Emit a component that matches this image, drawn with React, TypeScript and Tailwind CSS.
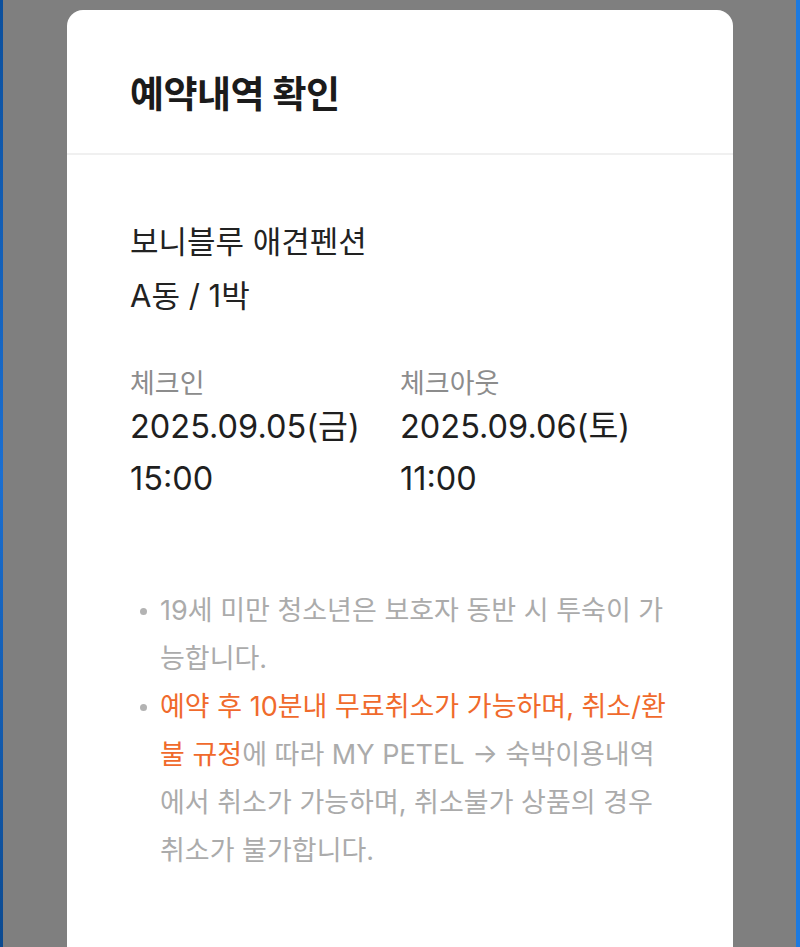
import React from 'react';

const FONT = { fontFamily: '"Inter", "Noto Sans CJK KR", "Noto Sans", sans-serif' };

const ReservationSheet: React.FC = () => {
  return (
    <div className="flex h-[947px] w-[800px] overflow-hidden bg-[#7f7f7f]" style={FONT}>
      {/* window edge */}
      <div className="w-[3px] shrink-0 bg-gradient-to-b from-[#0b4f9c] via-[#1a6fd2] to-[#0c4a90]" />

      <div className="flex-1">
        <div className="ml-[64px] mt-[10px] w-[666px] min-h-[1000px] rounded-t-[16px] bg-white">
          {/* Header */}
          <div className="flex h-[145px] items-center border-b-2 border-[#f0f0f0] px-[63px] pt-[26px]">
            <h1 className="text-[37px] font-bold tracking-[-0.5px] text-[#1b1b1b]">예약내역 확인</h1>
          </div>

          {/* Body */}
          <div className="px-[63px] pt-[60px]">
            <div className="text-[31px] leading-[54px] text-[#222222]">
              <p>보니블루 애견펜션</p>
              <p>A동 / 1박</p>
            </div>

            <div className="mt-[44px] grid grid-cols-2">
              <div>
                <p className="text-[27px] leading-[34px] text-[#8c8c8c]">체크인</p>
                <p className="text-[32.5px] leading-[52px] text-[#1f1f1f]">2025.09.05(금)</p>
                <p className="text-[32.5px] leading-[52px] text-[#1f1f1f]">15:00</p>
              </div>
              <div>
                <p className="text-[27px] leading-[34px] text-[#8c8c8c]">체크아웃</p>
                <p className="text-[32.5px] leading-[52px] text-[#1f1f1f]">2025.09.06(토)</p>
                <p className="text-[32.5px] leading-[52px] text-[#1f1f1f]">11:00</p>
              </div>
            </div>

            <ul className="mt-[82px] pb-[80px] text-[27px] leading-[48px] text-[#ababab]">
              <li className="flex">
                <span className="mt-[21px] ml-[10px] mr-[13px] h-[7px] w-[7px] shrink-0 rounded-full bg-[#b3b3b3]" />
                <span>19세 미만 청소년은 보호자 동반 시 투숙이 가능합니다.</span>
              </li>
              <li className="flex">
                <span className="mt-[21px] ml-[10px] mr-[13px] h-[7px] w-[7px] shrink-0 rounded-full bg-[#b3b3b3]" />
                <span>
                  <span className="text-[#f06a2c]">예약 후 10분내 무료취소가 가능하며, 취소/환불 규정</span>에 따라 MY PETEL → 숙박이용내역에서 취소가 가능하며, 취소불가 상품의 경우 취소가 불가합니다.
                </span>
              </li>
            </ul>
          </div>
        </div>
      </div>

      <div className="w-[4px] shrink-0 bg-[#1d7ae0]" />
    </div>
  );
};

export default function App() {
  return <ReservationSheet />;
}
